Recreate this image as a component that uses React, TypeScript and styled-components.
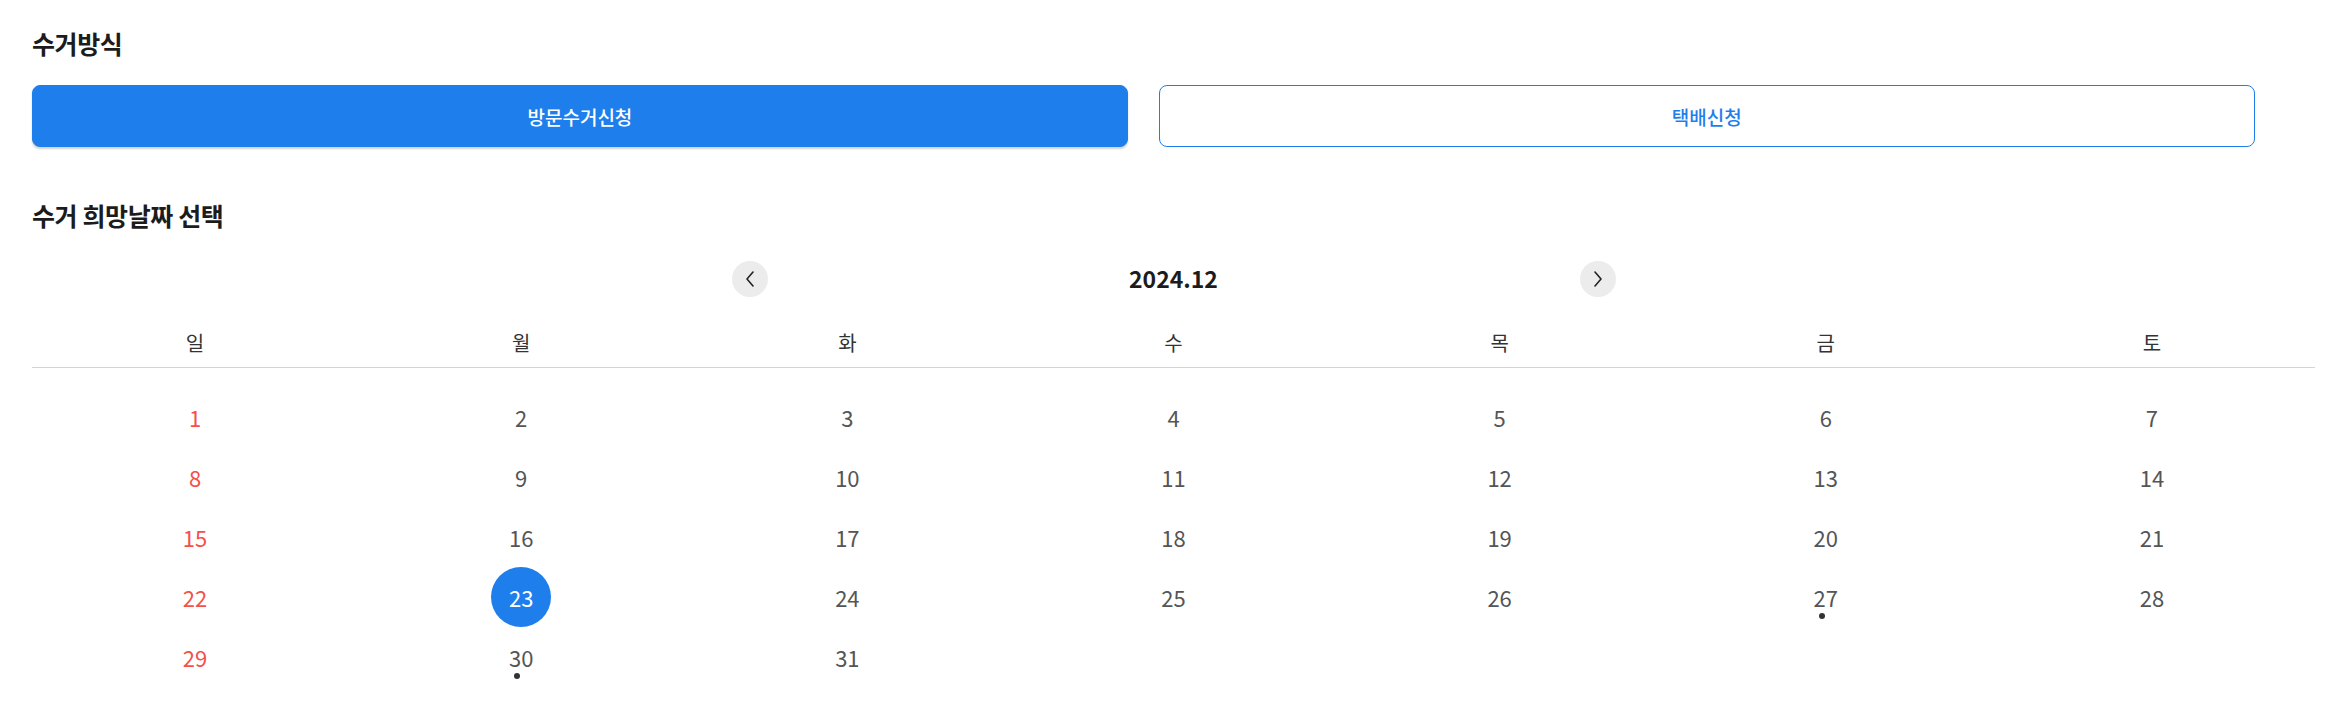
import React from "react";
import styled, { createGlobalStyle } from "styled-components";

const GlobalStyle = createGlobalStyle`
  html, body {
    margin: 0;
    padding: 0;
    background: #ffffff;
  }
  body {
    font-family: "Noto Sans CJK KR", "Noto Sans", sans-serif;
    color: #222;
  }
  * { box-sizing: border-box; }
`;

const BLUE = "#1e7eec";

const Page = styled.div`
  padding: 26px 36px 40px 32px;
  width: 2351px;
`;

const SectionTitle = styled.h2<{ $gap?: number }>`
  margin: ${(p) => p.$gap ?? 0}px 0 0 0;
  font-size: 25px;
  line-height: 34px;
  font-weight: 700;
  color: #1c1c1c;
  letter-spacing: -0.4px;
`;

const ButtonRow = styled.div`
  display: flex;
  gap: 31px;
  margin-top: 25px;
`;

const MethodButton = styled.button<{ $active?: boolean }>`
  width: 48%;
  height: 62px;
  border-radius: 8px;
  border: 1px solid ${BLUE};
  background: ${(p) => (p.$active ? BLUE : "#fff")};
  color: ${(p) => (p.$active ? "#fff" : BLUE)};
  box-shadow: ${(p) => (p.$active ? "0 2px 2px rgba(0,0,0,0.18)" : "none")};
  font-family: "Noto Sans CJK KR", sans-serif;
  font-size: 19px;
  font-weight: 500;
  cursor: pointer;
  padding: 0;
`;

const Nav = styled.div`
  width: 884px;
  margin: 29px auto 0;
  display: flex;
  align-items: center;
  justify-content: space-between;
  height: 36px;
`;

const NavButton = styled.button`
  width: 36px;
  height: 36px;
  border-radius: 50%;
  border: none;
  background: #ececec;
  display: flex;
  align-items: center;
  justify-content: center;
  padding: 0;
  cursor: pointer;
`;

const MonthTitle = styled.div`
  font-size: 23px;
  font-weight: 700;
  color: #1c1c1c;
  line-height: 36px;
  margin-top: -3px;
`;

const WeekHeader = styled.div`
  display: grid;
  grid-template-columns: repeat(7, 1fr);
  margin-top: 22px;
  border-bottom: 1px solid #d4d4d4;
`;

const WeekDay = styled.div`
  height: 48px;
  line-height: 48px;
  text-align: center;
  font-size: 20px;
  color: #333;
`;

const DayGrid = styled.div`
  display: grid;
  grid-template-columns: repeat(7, 1fr);
  grid-auto-rows: 60px;
  padding-top: 19px;
`;

const DayCell = styled.div`
  position: relative;
  display: flex;
  align-items: center;
  justify-content: center;
`;

const DayNumber = styled.span<{ $sunday?: boolean; $selected?: boolean }>`
  width: 60px;
  height: 60px;
  border-radius: 50%;
  display: flex;
  align-items: center;
  justify-content: center;
  font-size: 22px;
  font-weight: 400;
  background: ${(p) => (p.$selected ? BLUE : "transparent")};
  color: ${(p) => (p.$selected ? "#fff" : p.$sunday ? "#f5504a" : "#555")};
`;

const Dot = styled.span`
  position: absolute;
  left: 50%;
  top: 50%;
  width: 6px;
  height: 6px;
  margin-left: -7px;
  margin-top: 16px;
  border-radius: 50%;
  background: #333;
`;

const Chevron = ({ dir }: { dir: "left" | "right" }) => (
  <svg width="12" height="18" viewBox="0 0 12 18" fill="none">
    <polyline
      points={dir === "left" ? "9,2 3,9 9,16" : "3,2 9,9 3,16"}
      stroke="#222"
      strokeWidth="1.6"
      strokeLinecap="round"
      strokeLinejoin="round"
    />
  </svg>
);

const weekdays = ["일", "월", "화", "수", "목", "금", "토"];
const dotted = new Set([27, 30]);
const selected = 23;

export default function App() {
  const days: number[] = [];
  for (let d = 1; d <= 31; d++) days.push(d);

  return (
    <>
      <GlobalStyle />
      <Page>
        <SectionTitle>수거방식</SectionTitle>
        <ButtonRow>
          <MethodButton $active>방문수거신청</MethodButton>
          <MethodButton>택배신청</MethodButton>
        </ButtonRow>

        <SectionTitle $gap={51}>수거 희망날짜 선택</SectionTitle>

        <Nav>
          <NavButton aria-label="이전 달">
            <Chevron dir="left" />
          </NavButton>
          <MonthTitle>2024.12</MonthTitle>
          <NavButton aria-label="다음 달">
            <Chevron dir="right" />
          </NavButton>
        </Nav>

        <WeekHeader>
          {weekdays.map((w) => (
            <WeekDay key={w}>{w}</WeekDay>
          ))}
        </WeekHeader>

        <DayGrid>
          {days.map((d, i) => (
            <DayCell key={i}>
              <DayNumber $sunday={i % 7 === 0} $selected={d === selected}>
                {d}
              </DayNumber>
              {dotted.has(d) && <Dot />}
            </DayCell>
          ))}
        </DayGrid>
      </Page>
    </>
  );
}
